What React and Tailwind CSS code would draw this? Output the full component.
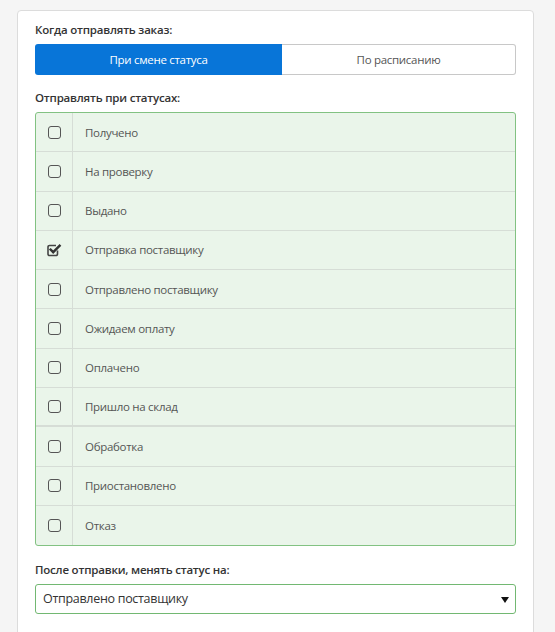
import React from "react";

const statuses = [
  { label: "Получено", checked: false },
  { label: "На проверку", checked: false },
  { label: "Выдано", checked: false },
  { label: "Отправка поставщику", checked: true },
  { label: "Отправлено поставщику", checked: false },
  { label: "Ожидаем оплату", checked: false },
  { label: "Оплачено", checked: false },
  { label: "Пришло на склад", checked: false, thick: true },
  { label: "Обработка", checked: false },
  { label: "Приостановлено", checked: false },
  { label: "Отказ", checked: false, last: true },
];

function Box({ checked }) {
  if (checked) {
    return (
      <svg width="15" height="14" viewBox="0 0 15 14" className="block ml-[1px]">
        <path
          d="M10.5 7.5 V11 a1.5 1.5 0 0 1 -1.5 1.5 H2.5 a1.5 1.5 0 0 1 -1.5 -1.5 V4 a1.5 1.5 0 0 1 1.5 -1.5 H9"
          fill="none"
          stroke="#444"
          strokeWidth="1.6"
        />
        <path d="M3.6 6.6 L6.2 9.2 L12.6 2.8" fill="none" stroke="#333" strokeWidth="2.4" strokeLinecap="square" />
      </svg>
    );
  }
  return <div className="w-[13px] h-[13px] rounded-[3px] border-[1.5px] border-[#555]" />;
}

export default function App() {
  return (
    <div
      className="min-h-[632px] bg-[#f5f5f5] pt-[10px] pl-[17px] pr-[21px]"
      style={{ fontFamily: '"Open Sans", "Noto Sans", sans-serif' }}
    >
      <div className="bg-white border border-[#dcdcdc] rounded-[4px] px-[17px] pt-[10px] pb-[20px] min-h-[640px]">
        <div className="text-[11.5px] tracking-[-0.2px] leading-[18px] font-semibold text-[#333] mb-[5px]">Когда отправлять заказ:</div>
        <div className="flex h-[31px]">
          <div className="w-[247px] bg-[#0875d8] rounded-l-[3px] text-white text-[11.5px] tracking-[-0.3px] flex items-center justify-center">
            При смене статуса
          </div>
          <div className="flex-1 border border-l-0 border-[#c8c8c8] rounded-r-[3px] text-[#555] text-[11.5px] tracking-[-0.3px] flex items-center justify-center">
            По расписанию
          </div>
        </div>

        <div className="text-[11.5px] tracking-[-0.2px] leading-[18px] font-semibold text-[#333] mt-[14px] mb-[5px]">Отправлять при статусах:</div>
        <div className="border border-[#82c282] rounded-[3px] bg-[#eaf5ea] overflow-hidden">
          {statuses.map((s) => (
            <div
              key={s.label}
              className={
                "flex h-[39.3px] " +
                (s.last ? "" : s.thick ? "border-b-2 border-[#d6ddd6]" : "border-b border-[#d6ddd6]")
              }
            >
              <div className="w-[37px] border-r border-[#d6ddd6] flex items-center justify-center">
                <Box checked={s.checked} />
              </div>
              <div className="flex-1 flex items-center pl-[12px] text-[11.5px] tracking-[-0.3px] text-[#555]">{s.label}</div>
            </div>
          ))}
        </div>

        <div className="text-[11.5px] tracking-[-0.2px] leading-[18px] font-semibold text-[#333] mt-[15px] mb-[5px]">После отправки, менять статус на:</div>
        <div className="relative h-[30px] border border-[#72b872] rounded-[3px] flex items-center pl-[7px] text-[12.5px] tracking-[-0.3px] text-[#333]">
          Отправлено поставщику
          <svg width="8" height="6" viewBox="0 0 8 6" className="absolute right-[6px] top-[12px]">
            <path d="M0 0 H8 L4 6 Z" fill="#111" />
          </svg>
        </div>
      </div>
    </div>
  );
}
